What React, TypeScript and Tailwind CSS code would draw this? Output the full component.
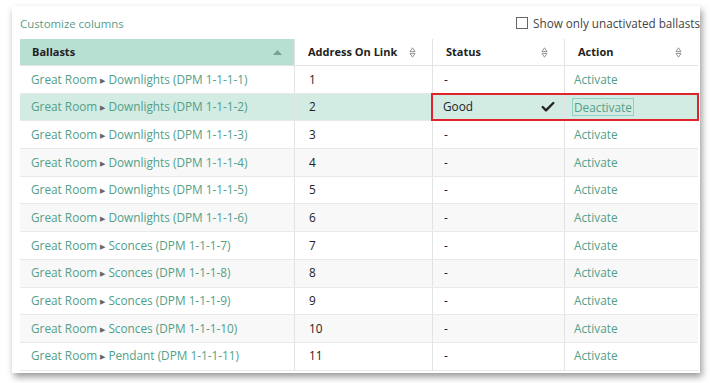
import { Check } from 'lucide-react';

type Row = {
  group: string;
  id: string;
  address: number;
  status: string;
  active: boolean;
};

const ROWS: Row[] = [
  { group: 'Downlights', id: '1-1-1-1', address: 1, status: '-', active: false },
  { group: 'Downlights', id: '1-1-1-2', address: 2, status: 'Good', active: true },
  { group: 'Downlights', id: '1-1-1-3', address: 3, status: '-', active: false },
  { group: 'Downlights', id: '1-1-1-4', address: 4, status: '-', active: false },
  { group: 'Downlights', id: '1-1-1-5', address: 5, status: '-', active: false },
  { group: 'Downlights', id: '1-1-1-6', address: 6, status: '-', active: false },
  { group: 'Sconces', id: '1-1-1-7', address: 7, status: '-', active: false },
  { group: 'Sconces', id: '1-1-1-8', address: 8, status: '-', active: false },
  { group: 'Sconces', id: '1-1-1-9', address: 9, status: '-', active: false },
  { group: 'Sconces', id: '1-1-1-10', address: 10, status: '-', active: false },
  { group: 'Pendant', id: '1-1-1-11', address: 11, status: '-', active: false },
];

const COLS = 'grid grid-cols-[274px_138px_132px_134px]';

// small up/down sort glyph for unsorted columns
function SortIcon() {
  return (
    <svg width="7" height="11" viewBox="0 0 7 11" className="shrink-0">
      <path d="M3.5 0.8 L6 4.6 H1 Z" fill="none" stroke="#8a8a8a" strokeWidth="0.9" />
      <path d="M3.5 10.2 L6 6.4 H1 Z" fill="none" stroke="#8a8a8a" strokeWidth="0.9" />
    </svg>
  );
}

function SortUp() {
  return (
    <svg width="9" height="5" viewBox="0 0 9 5" className="shrink-0">
      <path d="M4.5 0 L9 5 H0 Z" fill="#7d9e94" />
    </svg>
  );
}

function HeaderCell({ label, first }: { label: string; first?: boolean }) {
  return (
    <div
      className={
        first
          ? 'flex items-center justify-between bg-[#b7e0d3] pl-[12px] pr-[12px]'
          : 'flex items-center justify-between border-l border-[#e3e3e3] bg-white pl-[13px] pr-[16px]'
      }
    >
      <span className="text-[11px] font-bold text-[#222]">{label}</span>
      {first ? <SortUp /> : <SortIcon />}
    </div>
  );
}

function BallastName({ row }: { row: Row }) {
  return (
    <span className="text-[11.8px] text-[#52a088]">
      Great Room <span className="text-[6.5px] align-[1.5px] text-[#666]">▶</span> {row.group} (DPM {row.id})
    </span>
  );
}

function TableRow({ row, index }: { row: Row; index: number }) {
  const bg = row.active ? 'bg-[#d2ebe3]' : index % 2 === 1 ? 'bg-[#f8f8f8]' : 'bg-white';
  return (
    <div className={`${COLS} h-[27.7px] border-b border-[#e9e9e9] ${bg}`}>
      <div className="flex items-center pl-[11px]">
        <BallastName row={row} />
      </div>
      <div className="flex items-center border-l border-[#e3e3e3] pl-[14px] text-[11.8px] text-[#222]">
        {row.address}
      </div>
      {row.active ? (
        <div className="col-span-2 grid grid-cols-[132px_134px] outline-2 -outline-offset-1 outline-[#e0242b]">
          <div className="flex items-center justify-between border-l border-[#e3e3e3] pl-[10px] pr-[8px] text-[11.8px] text-[#222]">
            Good
            <Check size={16} strokeWidth={3.5} className="text-[#222]" />
          </div>
          <div className="flex items-center border-l border-[#e3e3e3] pl-[7px]">
            <span className="border border-[#8fd3c8] px-[1px] text-[11.8px] leading-[16px] text-[#52a088]">
              Deactivate
            </span>
          </div>
        </div>
      ) : (
        <>
          <div className="flex items-center border-l border-[#e3e3e3] pl-[11px] text-[11.8px] text-[#222]">
            {row.status}
          </div>
          <div className="flex items-center border-l border-[#e3e3e3] pl-[9px] text-[11.8px] text-[#52a088]">
            Activate
          </div>
        </>
      )}
    </div>
  );
}

export default function App() {
  return (
    <div
      className="h-[383px] w-[710px] overflow-hidden bg-white pl-[12px] pt-[6px]"
      style={{ fontFamily: '"Open Sans", "Noto Sans", sans-serif' }}
    >
      <div className="h-[367px] w-[688px] overflow-hidden bg-white pl-[8px] pt-[2px] shadow-[2px_4px_7px_rgba(0,0,0,0.4)]">
        <div className="flex h-[31px] items-center justify-between">
          <span className="text-[11.4px] text-[#5a9c8a]">Customize columns</span>
          <label className="flex items-center gap-[5px] whitespace-nowrap text-[11.7px] text-[#444]">
            <span className="h-[12px] w-[12px] border border-[#666] bg-white" />
            Show only unactivated ballasts
          </label>
        </div>
        <div className="w-[678px]">
          <div className={`${COLS} h-[27px] border-b border-[#e3e3e3]`}>
            <HeaderCell label="Ballasts" first />
            <HeaderCell label="Address On Link" />
            <HeaderCell label="Status" />
            <HeaderCell label="Action" />
          </div>
          {ROWS.map((row, i) => (
            <TableRow key={row.id} row={row} index={i} />
          ))}
        </div>
      </div>
    </div>
  );
}
